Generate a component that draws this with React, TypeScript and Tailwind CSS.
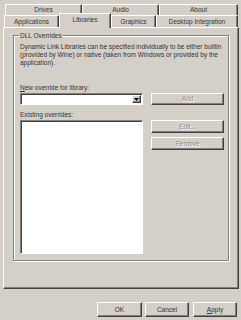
import React from "react"

const raised =
  "border border-t-white border-l-white border-r-[#404040] border-b-[#404040] shadow-[inset_-1px_-1px_0_#808080]"
const sunken =
  "border border-t-[#808080] border-l-[#808080] border-r-white border-b-white shadow-[inset_1px_1px_0_#404040]"

function Tab({ label, w, selected }: { label: string; w: string; selected?: boolean }) {
  if (selected) {
    return (
      <div
        className={`${w} relative z-10 -mt-[2px] h-[15px] border-l border-t border-r border-t-white border-l-white border-r-[#404040] bg-[#d4d0c8] shadow-[inset_-1px_0_0_#808080] flex items-start justify-center pt-[2px] leading-[8px]`}
      >
        {label}
      </div>
    )
  }
  return (
    <div
      className={`${w} h-full border-l border-t border-r border-t-white border-l-white border-r-[#404040] shadow-[inset_-1px_0_0_#808080] flex items-center justify-center leading-[8px]`}
    >
      {label}
    </div>
  )
}

function Button({
  children,
  className = "",
  disabled,
}: {
  children: React.ReactNode
  className?: string
  disabled?: boolean
}) {
  return (
    <div
      className={`${raised} ${className} bg-[#d4d0c8] flex items-center justify-center leading-[8px] ${
        disabled ? "text-[#8a8a8a] [text-shadow:1px_1px_0_#fff]" : "text-[#333]"
      }`}
    >
      {children}
    </div>
  )
}

export default function App() {
  return (
    <div
      className="w-[241px] h-[320px] bg-[#d4d0c8] text-[#333] text-[6.5px] flex flex-col overflow-hidden"
      style={{ fontFamily: '"Liberation Sans", Arial, sans-serif' }}
    >
      {/* tab strip */}
      <div className="pt-[4px] flex h-[15px] pl-[5px]">
        <Tab label="Drives" w="w-[77px]" />
        <Tab label="Audio" w="w-[77px]" />
        <Tab label="About" w="w-[79px]" />
      </div>
      <div className="flex h-[12px] pl-[4px] items-start">
        <Tab label="Applications" w="w-[55px]" />
        <Tab label="Libraries" w="w-[52px]" selected />
        <Tab label="Graphics" w="w-[45px]" />
        <Tab label="Desktop Integration" w="w-[82px]" />
      </div>

      {/* page */}
      <div className={`${raised} ml-[3px] w-[236px] h-[262px] pl-[9px] pt-[7px]`}>
        <div className="relative w-[216px] h-[226px] border border-[#808080] shadow-[1px_1px_0_#fff,inset_1px_1px_0_#fff] pl-[6px] pt-[7px]">
          <span className="absolute -top-[4px] left-[5px] bg-[#d4d0c8] px-[1px] leading-[8px]">
            DLL Overrides
          </span>

          <p className="leading-[8px] w-[205px]">
            Dynamic Link Libraries can be specified individually to be either builtin
            (provided by Wine) or native (taken from Windows or provided by the
            application).
          </p>

          <div className="mt-[17px] leading-[8px]">
            <span className="underline">N</span>ew override for library:
          </div>

          <div className="mt-[1px] flex">
            <div className={`${sunken} w-[123px] h-[12px] bg-white flex justify-end p-[1px]`}>
              <div className={`${raised} w-[9px] h-full bg-[#d4d0c8] flex items-center justify-center`}>
                <svg width="5" height="3" viewBox="0 0 5 3">
                  <path d="M0 0h5L2.5 3z" fill="#000" />
                </svg>
              </div>
            </div>
            <Button className="ml-[8px] w-[73px] h-[12px]" disabled>
              Add
            </Button>
          </div>

          <div className="mt-[6px] leading-[8px]">Existing overrides:</div>

          <div className="mt-[1px] flex items-start">
            <div className={`${sunken} w-[123px] h-[134px] bg-white`} />
            <div className="ml-[8px] flex flex-col gap-[4px]">
              <Button className="w-[73px] h-[13px]" disabled>
                Edit...
              </Button>
              <Button className="w-[73px] h-[13px]" disabled>
                Remove
              </Button>
            </div>
          </div>
        </div>
      </div>

      {/* dialog buttons */}
      <div className="mt-[13px] flex justify-end pr-[4px]">
        <Button className="w-[45px] h-[15px]">OK</Button>
        <Button className="ml-[3px] w-[44px] h-[15px]">Cancel</Button>
        <Button className="ml-[4px] w-[44px] h-[15px]">
          <span>
            <span className="underline">A</span>pply
          </span>
        </Button>
      </div>
    </div>
  )
}
